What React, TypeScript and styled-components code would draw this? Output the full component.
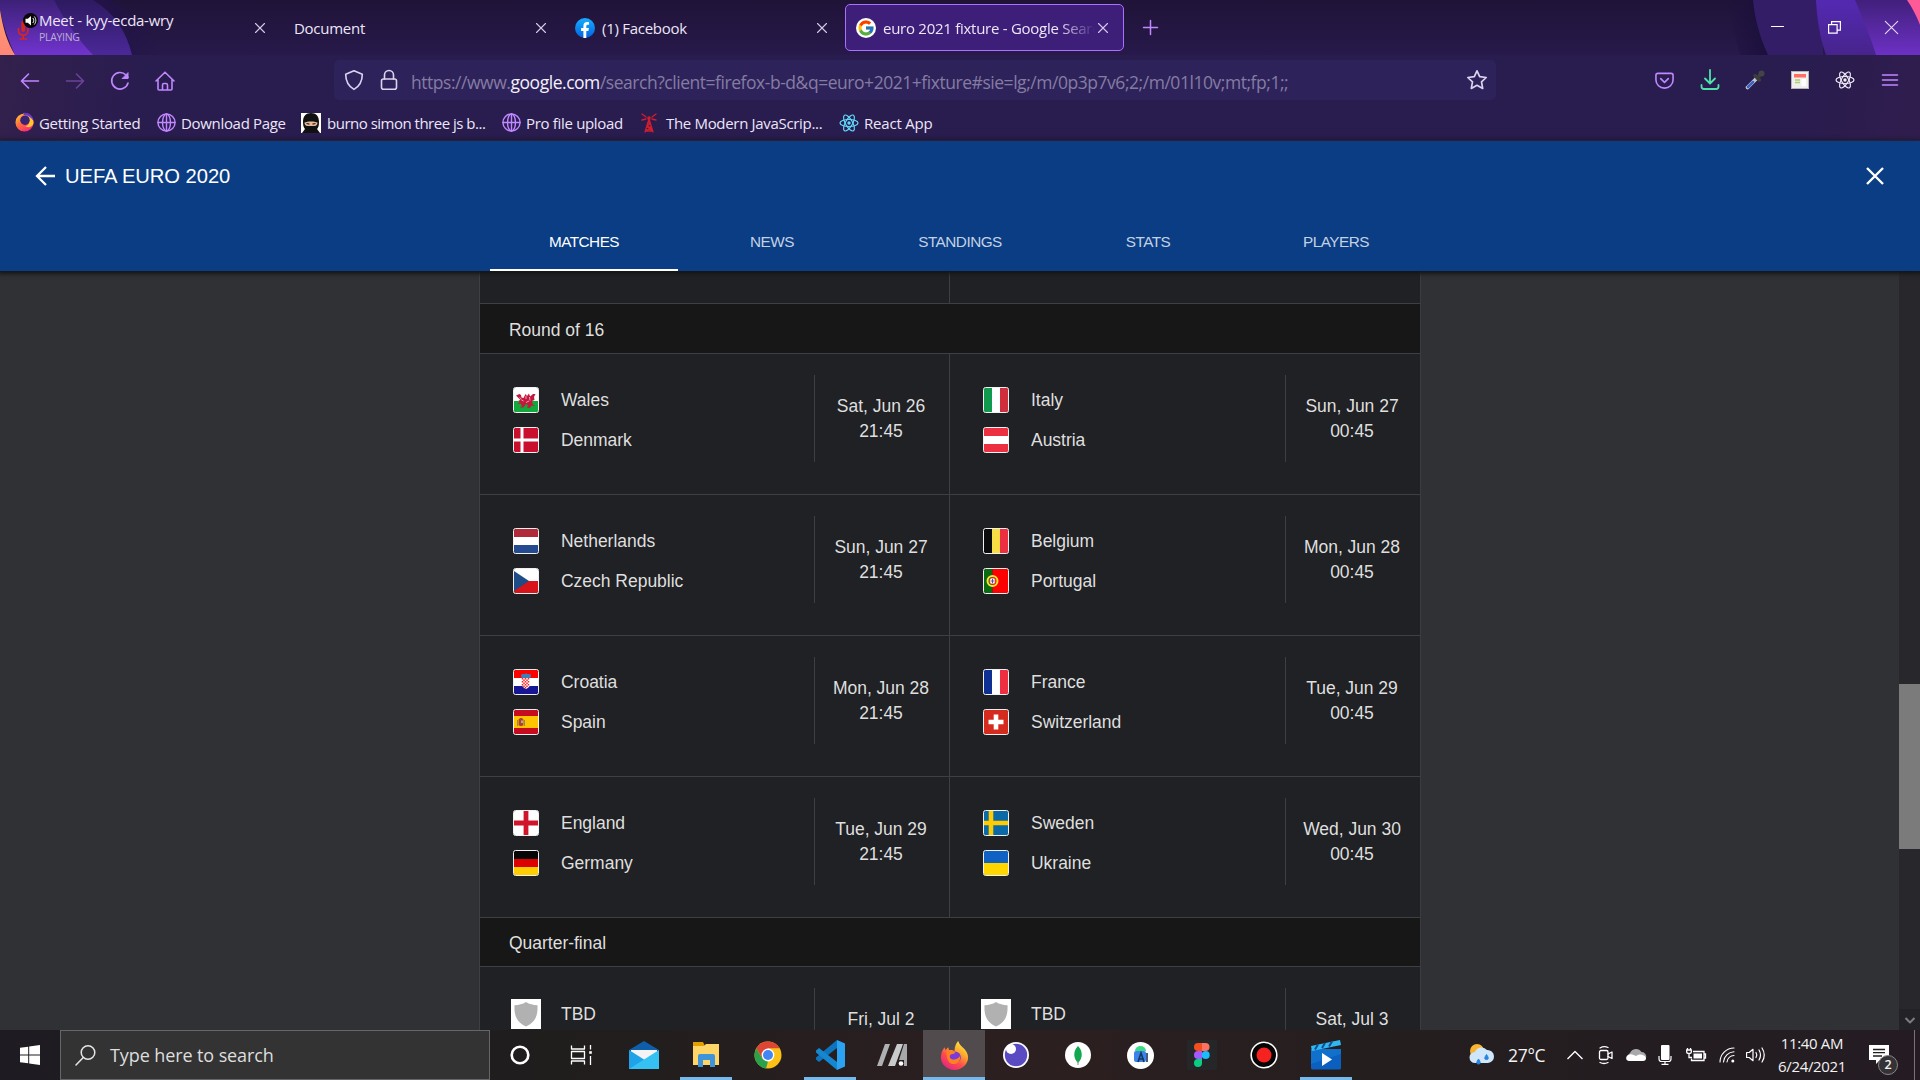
import React from "react";
import styled, { createGlobalStyle, css } from "styled-components";
import { FcGoogle } from "react-icons/fc";

const ui = `"Open Sans", "Noto Sans", sans-serif`;
const arial = `"Liberation Sans", Arial, sans-serif`;

const Global = createGlobalStyle`
  * { box-sizing: border-box; }
  html, body { margin: 0; background: #303134; overflow: hidden; }
  svg { display: block; flex: none; overflow: visible; }
`;

const Screen = styled.div`
  width: 1920px;
  height: 1080px;
  display: flex;
  flex-direction: column;
  overflow: hidden;
  font-family: ${ui};
`;

/* ---------- browser chrome ---------- */
const TabStrip = styled.div`
  position: relative;
  height: 55px;
  display: flex;
  align-items: center;
  padding-left: 2px;
  background: linear-gradient(#201338, #27194a);
`;
const ThemeArt = styled.svg<{ $side: "left" | "right" }>`
  position: absolute;
  top: 0;
  ${(p) => p.$side}: 0;
`;
const TabItem = styled.div<{ $active?: boolean; $bare?: boolean }>`
  position: relative;
  width: 279px;
  height: 47px;
  margin-right: 2px;
  padding: 0 15px 0 10px;
  display: flex;
  align-items: center;
  border-radius: 5px;
  border: 1px solid ${(p) => (p.$active ? "#ac70ff" : "transparent")};
  background: ${(p) => (p.$active ? "#3d1f7a" : "transparent")};
`;
const TabIcon = styled.div<{ $gap?: number }>`
  width: 20px;
  height: 20px;
  margin-right: ${(p) => p.$gap ?? 7}px;
`;
const TabLabels = styled.div<{ $single?: boolean }>`
  flex: 1;
  min-width: 0;
  padding-top: ${(p) => (p.$single ? 2 : 0)}px;
  display: flex;
  flex-direction: column;
`;
const TabTitle = styled.div<{ $fade?: boolean }>`
  font-size: 15px;
  line-height: 19px;
  letter-spacing: -0.27px;
  color: #ece6f8;
  white-space: nowrap;
  overflow: hidden;
  ${(p) => p.$fade && css`
    mask-image: linear-gradient(to right, #000 175px, transparent 212px);
  `}
`;
const TabNote = styled.div`
  font-size: 10.5px;
  line-height: 14px;
  letter-spacing: -0.3px;
  color: #b9aed2;
`;
const NewTab = styled.div`
  padding-left: 17px;
`;
const WindowButtons = styled.div`
  position: relative;
  margin-left: auto;
  display: flex;
`;
const WindowButton = styled.div`
  width: 57px;
  display: flex;
  justify-content: center;
`;
const Toolbars = styled.div`
  height: 86px;
  border-bottom: 1px solid #45306f;
  background: linear-gradient(100deg, #33204c 0, #2c1e4f 90px, #291c4e 150px, #291c4e 1780px, #301d4e 1910px);
`;
const NavBar = styled.div`
  height: 50px;
  display: flex;
  align-items: center;
`;
const NavButtons = styled.div`
  width: 334px;
  padding: 1px 0 0 7px;
  display: flex;
`;
const NavButton = styled.div`
  width: 45px;
  display: flex;
  justify-content: center;
`;
const UrlBar = styled.div`
  width: 1162px;
  height: 40px;
  padding: 0 9px 0 10px;
  display: flex;
  align-items: center;
  border-radius: 5px;
  background: #2d235a;
`;
const SiteBadges = styled.div`
  display: flex;
  gap: 15px;
`;
const UrlText = styled.div`
  flex: 1;
  margin-left: 12px;
  padding-top: 3px;
  font-size: 17.5px;
  letter-spacing: -0.46px;
  color: #857ca3;
  white-space: nowrap;
  b { font-weight: 400; color: #f4f0fc; }
`;
const Extensions = styled.div`
  margin-left: auto;
  padding-right: 8px;
  display: flex;
  align-items: center;
`;
const Bookmarks = styled.div`
  height: 35px;
  padding-left: 15px;
  display: flex;
  align-items: center;
`;
const Bookmark = styled.div<{ $w: number; $ls?: number; $gap?: number }>`
  width: ${(p) => p.$w}px;
  display: flex;
  align-items: center;
  gap: ${(p) => p.$gap ?? 5}px;
  font-size: 15px;
  letter-spacing: ${(p) => p.$ls ?? -0.32}px;
  white-space: nowrap;
  color: #ece6f8;
`;

/* ---------- page ---------- */
const BlueHeader = styled.header`
  position: relative;
  z-index: 1;
  height: 130px;
  flex: none;
  background: #0a3d84;
  box-shadow: 0 1px 4px 2px #151617;
  font-family: ${arial};
  display: flex;
  flex-direction: column;
  justify-content: space-between;
`;
const TitleRow = styled.div`
  height: 70px;
  padding: 0 35px;
  display: flex;
  align-items: center;
  justify-content: space-between;
`;
const Title = styled.div`
  display: flex;
  align-items: center;
  gap: 10px;
  font-size: 20.2px;
  letter-spacing: -0.06px;
  color: #fff;
`;
const SectionTabs = styled.nav`
  display: flex;
  justify-content: center;
`;
const SectionTab = styled.div<{ $on?: boolean }>`
  width: 188px;
  height: 58px;
  line-height: 58px;
  text-align: center;
  font-size: 15.3px;
  letter-spacing: -0.5px;
  color: ${(p) => (p.$on ? "#fff" : "#c4d1e3")};
  border-bottom: 2px solid ${(p) => (p.$on ? "#fff" : "transparent")};
`;
const Page = styled.main`
  height: 759px;
  flex: none;
  display: flex;
  background: #303134;
  overflow: hidden;
`;
const Scroller = styled.div`
  width: 1899px;
  padding-left: 479px;
  overflow: hidden;
`;
const Card = styled.section`
  width: 942px;
  height: 800px;
  border-left: 1px solid #3c4043;
  border-right: 1px solid #3a3c40;
  background: #202124;
  font-family: ${arial};
  font-size: 17.5px;
  letter-spacing: -0.02px;
  color: #dfdfdf;
`;
const RoundTitle = styled.div<{ $h: number }>`
  height: ${(p) => p.$h}px;
  padding: 3px 29px 0;
  display: flex;
  align-items: center;
  background: #171717;
  border-bottom: 1px solid #3c4043;
`;
const MatchRow = styled.div<{ $h?: number }>`
  height: ${(p) => p.$h ?? 141}px;
  display: grid;
  grid-template-columns: 470px 470px;
  border-bottom: 1px solid #3c4043;
`;
const MatchCell = styled.div<{ $first?: boolean }>`
  display: flex;
  justify-content: space-between;
  padding-top: 21px;
  ${(p) => p.$first && css`border-right: 1px solid #3c4043;`}
`;
const Teams = styled.div<{ $crest?: boolean }>`
  padding: ${(p) => (p.$crest ? 11 : 12)}px 0 0 ${(p) => (p.$crest ? 31 : 33)}px;
  display: flex;
  flex-direction: column;
  gap: 14px;
`;
const Team = styled.div<{ $gap: number }>`
  display: flex;
  align-items: center;
  gap: ${(p) => p.$gap}px;
`;
const Kickoff = styled.div`
  width: 135px;
  height: 87px;
  padding: 19px 2px 0 0;
  border-left: 1px solid #3c4043;
  text-align: center;
  line-height: 25px;
`;
const Scrollbar = styled.div`
  width: 21px;
  display: flex;
  flex-direction: column;
  justify-content: space-between;
  align-items: center;
  background: #28282c;
`;
const Thumb = styled.div`
  width: 21px;
  height: 165px;
  margin-top: 413px;
  background: #7b7b7c;
`;
const ScrollArrow = styled.div`
  width: 21px;
  height: 21px;
  display: flex;
  align-items: center;
  justify-content: center;
  background: #232327;
`;

/* ---------- taskbar ---------- */
const Taskbar = styled.footer`
  height: 50px;
  flex: none;
  display: flex;
  align-items: center;
  background: linear-gradient(to right, #1e1c22 0, #1f1d1d 500px, #2c1f20 1040px, #241e1f 1400px, #231d22 1700px, #241c22);
`;
const Start = styled.div`
  width: 60px;
  display: flex;
  justify-content: center;
`;
const SearchBox = styled.div`
  width: 430px;
  height: 50px;
  padding-left: 14px;
  display: flex;
  align-items: center;
  gap: 14px;
  background: #333333;
  border: 1px solid #66666a;
  font-size: 18px;
  letter-spacing: -0.1px;
  color: #dedede;
`;
const Apps = styled.div`
  display: flex;
  margin-left: -1px;
`;
const AppButton = styled.div<{ $active?: boolean; $running?: boolean }>`
  position: relative;
  width: 62px;
  height: 50px;
  display: flex;
  align-items: center;
  justify-content: center;
  background: ${(p) => (p.$active ? "#514b4d" : "transparent")};
  &::after {
    content: "";
    position: absolute;
    bottom: 0;
    left: ${(p) => (p.$active ? 0 : 5)}px;
    right: ${(p) => (p.$active ? 0 : 5)}px;
    height: 3px;
    background: ${(p) => (p.$active || p.$running ? "#76b9ed" : "transparent")};
  }
`;
const Tray = styled.div`
  margin-left: auto;
  display: flex;
  align-items: center;
  color: #f2f2f2;
`;
const TrayCell = styled.div<{ $w: number }>`
  width: ${(p) => p.$w}px;
  display: flex;
  justify-content: center;
`;
const Temp = styled.div`
  width: 64px;
  padding-left: 13px;
  font-size: 17.5px;
  letter-spacing: -0.3px;
`;
const Clock = styled.div`
  width: 84px;
  text-align: center;
  font-size: 15px;
  line-height: 23px;
  letter-spacing: -0.35px;
  white-space: nowrap;
`;
const Notify = styled.div`
  position: relative;
  width: 61px;
  height: 50px;
  padding: 15px 0 0 15px;
  border-right: 1px solid #77737a;
  margin-right: 5px;
`;
const Badge = styled.div`
  position: absolute;
  left: 24px;
  top: 25px;
  width: 20px;
  height: 20px;
  border-radius: 50%;
  border: 1px solid #88868a;
  background: #353236;
  text-align: center;
  font-size: 12.5px;
  font-weight: 600;
  line-height: 18px;
`;

/* ---------- icons ---------- */
const Stroke = ({ s = 20, c = "#c087ff", w = 1.8, vb = 20, children }: any) => (
  <svg width={s} height={s} viewBox={`0 0 ${vb} ${vb}`} fill="none" stroke={c} strokeWidth={w} strokeLinecap="round" strokeLinejoin="round">{children}</svg>
);
const CloseX = () => <Stroke s={10} vb={10} w={1.1} c="#d6cce8"><path d="M.5.5l9 9M9.5.5l-9 9" /></Stroke>;
const Globe = () => (
  <Stroke s={19} w={1.5}><circle cx="10" cy="10" r="9" /><ellipse cx="10" cy="10" rx="4.2" ry="9" /><path d="M1 10h18M10 1v18" /></Stroke>
);
const Flame = () => (
  <svg width="29" height="29" viewBox="0 0 32 32">
    <defs>
      <linearGradient id="fx" x1=".85" y1="0" x2=".2" y2="1">
        <stop offset="0" stopColor="#fff44f" /><stop offset=".35" stopColor="#ffa72a" /><stop offset=".65" stopColor="#ff4a4d" /><stop offset="1" stopColor="#e0218c" />
      </linearGradient>
    </defs>
    <path d="M20 0c1 2 1.500 4 4 6 5 4 7 8 7 12 0 8-7 14-15 14S1 26 1 18c0-5 2-8 4-11l1 3 3-3 1 3c2 0 4 0 6 1 0-5 2-9 4-11z" fill="url(#fx)" />
    <circle cx="16.500" cy="18" r="6.500" fill="#7a3bd8" />
    <path d="M7 12c3-2 6-2 10 1-2 2-5 1-6 3-1 3 2 5 5 4.500 3-.5 5-2 6-4 1 5-2 9-7 9S7 20 7 12z" fill="#ff7f23" />
  </svg>
);
const OldFirefox = () => (
  <svg width="19" height="19" viewBox="0 0 20 20">
    <defs><linearGradient id="ofx" x1="0" y1="0" x2=".7" y2="1"><stop offset="0" stopColor="#ffd23c" /><stop offset=".5" stopColor="#ff7139" /><stop offset="1" stopColor="#f5257b" /></linearGradient></defs>
    <circle cx="10" cy="10" r="9.500" fill="url(#ofx)" />
    <path d="M8 0c6-1 12 4 11.500 11C18 15 14 16 11 14c4-1 5-5 3-8-1-3-3-5-6-6z" fill="#ffc52e" />
    <circle cx="10.500" cy="7.500" r="5" fill="#3a2375" />
    <path d="M9 0c5-1 10 3 10.500 8C17 5 14 2 9 2z" fill="#6a35c9" />
  </svg>
);
const MeetIcon = () => (
  <svg width="20" height="20" viewBox="0 0 20 20">
    <g fill="none" stroke="#d7261e" strokeWidth="1.700"><path d="M5.500 10v2.500a4.700 4.700 0 0 0 9.400 0V10M10.200 17.500v4M6.500 21h7.500" /></g>
    <rect x="8.300" y="3" width="4" height="11" rx="2" fill="#d7261e" />
    <circle cx="17.500" cy="2.500" r="7.500" fill="#080808" />
    <path d="M12.500.700h2.300L18-2v9.500l-3.200-2.800h-2.300z" fill="#fff" />
    <path d="M19.800 0c1.300 1.500 1.300 3.500 0 5M21.300-1.500c2 2.500 2 5.500 0 8" fill="none" stroke="#fff" />
  </svg>
);
const Facebook = () => (
  <svg width="20" height="20" viewBox="0 0 20 20">
    <defs><linearGradient id="fb" x2="0" y2="1"><stop stopColor="#18acfe" /><stop offset="1" stopColor="#0163e0" /></linearGradient></defs>
    <circle cx="10" cy="10" r="10" fill="url(#fb)" />
    <path d="M8.400 20v-7.100H6.100V10h2.300V8c0-2.600 1.400-3.900 3.700-3.900.7 0 1.300.1 1.900.2v2.400h-1.200c-1.200 0-1.500.7-1.500 1.500V10h2.600l-.5 2.900h-2.100V20z" fill="#fff" />
  </svg>
);
const GoogleFav = () => (
  <svg width="20" height="20" viewBox="0 0 20 20"><circle cx="10" cy="10" r="10" fill="#fff" /><FcGoogle x="1" y="1" width="18" height="18" size={18} /></svg>
);
const Ninja = () => (
  <svg width="20" height="20" viewBox="0 0 20 20">
    <rect width="20" height="20" fill="#fff" /><path d="M2 9C2 3 5 0 10 0s8 3 8 9c0 4-1 6-2 7l3 4H1l3-4C3 15 2 13 2 9z" fill="#111" />
    <path d="M3.500 9.500c3-1.500 10-1.500 13 0 0 2-1 3.500-3 3.500h-7c-2 0-3-1.500-3-3.500z" fill="#e8bb9b" /><path d="M5.500 10.500l3 .7M14.500 10.500l-3 .7" stroke="#222" strokeWidth="1.200" />
  </svg>
);
const Tower = () => (
  <Stroke s={20} c="#cf1f2e" w={1.3}><path d="M10 6L6 19M10 6l4 13M8.500 10h3l-4 4h5l-6 4h7l-5-4M3 1l4 3M17 1l-4 3M3 7l4-1M17 7l-4-1" /><circle cx="10" cy="5" r="1.200" fill="#cf1f2e" /></Stroke>
);
const Orbit = ({ s, c }: { s: number; c: string }) => (
  <svg width={s} height={s} viewBox="0 0 20 20" fill="none" stroke={c} strokeWidth="1.200">
    {[0, 60, 120].map((a) => <ellipse key={a} cx="10" cy="10" rx="9" ry="3.500" transform={`rotate(${a} 10 10)`} />)}
    <circle cx="10" cy="10" r="1.700" fill={c} stroke="none" />
  </svg>
);

/* ---------- flags ---------- */
const bands = (dir: "h" | "v", cols: string[], sizes?: number[]) => {
  const z = sizes ?? cols.map(() => 24 / cols.length);
  let at = 0;
  return cols.map((c, i) => {
    const a = at;
    at += z[i];
    return dir === "h" ? <rect key={i} y={a} width="24" height={z[i]} fill={c} /> : <rect key={i} x={a} width={z[i]} height="24" fill={c} />;
  });
};
const flags: Record<string, React.ReactNode> = {
  Wales: <>{bands("h", ["#fff", "#12a83b"], [13, 11])}<path d="M2 7.500l3.500-1.500 1.500 1 .5 2.500 2 .5 2-4 1.500 2 2-2.500 1 3 3-2.500 2.500 0-1.500 3 .5 3-2.500 1 .5 3 2.500 2-3.500-.5-1.500 2.500-3-.5 1-2.500-2-1-2.500 3.500-3.500 0 2-1.500-1.500-2.500-3 .5 2-2-1-1.500 2-.5z" fill="#c4183c" /><path d="M7.500 12l2 1M15.500 9l.5 3.500M5.500 9.500l2 1.500M12 14.500l3-1.500M12 8v3" stroke="#fff" strokeWidth=".6" /></>,
  Denmark: <><rect width="24" height="24" fill="#c8102e" /><path d="M8 0v24M0 12h24" stroke="#fff" strokeWidth="3" /></>,
  Italy: bands("v", ["#109a50", "#fff", "#cf2f3c"]),
  Austria: bands("h", ["#ed2f42", "#fff", "#ed2f42"]),
  Netherlands: bands("h", ["#b02a3a", "#fff", "#244a90"]),
  "Czech Republic": <>{bands("h", ["#fff", "#d7141a"])}<path d="M0 2l15 10L0 22z" fill="#1d4c86" /></>,
  Belgium: bands("v", ["#0c0c0c", "#f9dd45", "#ed2f42"]),
  Portugal: <>{bands("v", ["#0c6b12", "#fe0000"], [8.5, 15.5])}<circle cx="8.500" cy="12" r="5" fill="none" stroke="#f7ea2b" strokeWidth="2" /><rect x="5.800" y="9" width="5.400" height="6" rx="1.500" fill="#fff" stroke="#e33" /><path d="M8.500 10v4M7 12h3" stroke="#4456a8" /></>,
  Croatia: <>{bands("h", ["#fe0000", "#fff", "#171796"])}<path d="M7.500 8h9v5c0 3-2 5-4.500 6C9.500 18 7.500 16 7.500 13z" fill="#fff" /><path d="M8.500 8v8M11.500 8v10.500M14.500 8v9" stroke="#f22" strokeDasharray="1.500 1.500" strokeWidth="1.500" /><path d="M10 9.500v8.500M13 9.500v9" stroke="#f22" strokeDasharray="1.500 1.500" strokeWidth="1.500" /><path d="M7 4.500l2-.5h2l1-1 1 1h2l2 .5-.5 3.500h-9z" fill="#3e7fb5" /></>,
  Spain: <>{bands("h", ["#c60b1e", "#ffc400", "#c60b1e"], [6, 12, 6])}<path d="M3 10h1.300v6H3zM9.700 10H11v6H9.700z" fill="#a3864a" /><path d="M4.700 9.500c1-2 3.600-2 4.600 0v5.500c-1 1.500-3.600 1.500-4.600 0z" fill="#a8452a" /><path d="M7 10.500h2v2.500H7z" fill="#b9a0b5" /></>,
  France: bands("v", ["#0e2f94", "#fff", "#ee2f42"]),
  Switzerland: <><rect width="24" height="24" fill="#d52b1e" /><path d="M12 4.500v15M4.500 12h15" stroke="#fff" strokeWidth="4.600" /></>,
  England: <><rect width="24" height="24" fill="#fff" /><path d="M12 0v24M0 12h24" stroke="#cf142b" strokeWidth="4.800" /></>,
  Germany: bands("h", ["#060606", "#dd0000", "#ffce00"]),
  Sweden: <><rect width="24" height="24" fill="#0a6aa7" /><path d="M7 0v24M0 12h24" stroke="#fecc00" strokeWidth="4.600" /></>,
  Ukraine: bands("h", ["#0f61c4", "#ffd600"]),
};
const Flag = ({ name }: { name: string }) => (
  <svg width="26" height="26" viewBox="-1 -1 26 26">
    <defs><clipPath id="flagclip"><rect width="24" height="24" rx="1" /></clipPath></defs>
    <g clipPath="url(#flagclip)">{flags[name]}</g>
    <rect x="-.5" y="-.5" width="25" height="25" rx="2" fill="none" stroke="#f1f1f1" />
  </svg>
);
const Crest = () => (
  <svg width="30" height="30" viewBox="0 0 30 30"><rect width="30" height="30" fill="#fff" /><path d="M15 3c3.500 2.200 7 3 11.500 3.200C27 17 24 23.500 15 27.500 6 23.500 3 17 3.500 6.200 8 6 11.500 5.200 15 3z" fill="#b1b1b1" /></svg>
);

const roundOf16 = [
  [["Wales", "Denmark", "Sat, Jun 26", "21:45"], ["Italy", "Austria", "Sun, Jun 27", "00:45"]],
  [["Netherlands", "Czech Republic", "Sun, Jun 27", "21:45"], ["Belgium", "Portugal", "Mon, Jun 28", "00:45"]],
  [["Croatia", "Spain", "Mon, Jun 28", "21:45"], ["France", "Switzerland", "Tue, Jun 29", "00:45"]],
  [["England", "Germany", "Tue, Jun 29", "21:45"], ["Sweden", "Ukraine", "Wed, Jun 30", "00:45"]],
];
const quarterFinals = [["TBD", "Fri, Jul 2"], ["TBD", "Sat, Jul 3"]];

const taskApps: { el: React.ReactNode; active?: boolean; running?: boolean }[] = [
  { el: <svg width="22" height="22" viewBox="0 0 22 22"><circle cx="11" cy="11" r="8.300" fill="none" stroke="#fff" strokeWidth="2.600" /></svg> },
  { el: <Stroke s={20} c="#fff" w={1.3}><path d="M-.5.500v3.500h13V.5M-.5 19.500V16h13v3.500M-.5 6.500h13v7h-13zM18.500 0v4.500M18.500 11v9" strokeLinecap="butt" /><path d="M17.200 6.200h2.600v2.600h-2.600z" fill="#fff" stroke="none" /></Stroke> },
  { el: <svg width="30" height="28" viewBox="0 0 30 28"><path d="M0 9L15 0l15 9v4H0z" fill="#0f5eaa" /><path d="M2 9h26v10H2z" fill="#f2f4f7" /><path d="M0 9l30 19H0z" fill="#1fa2e8" /><path d="M30 9v19H0z" fill="#35c1f1" /><path d="M3 9h24L15 18z" fill="#f4f4f4" /></svg> },
  { running: true, el: <svg width="28" height="26" viewBox="0 0 28 26"><path d="M1 0h10l2 4H1z" fill="#e0a000" /><path d="M1 4h11l2-2h13v21H1z" fill="#fdd667" /><path d="M6 14q0-2 2-2h13q2 0 2 2v11h-5v-7h-7v7H6z" fill="#3f93d8" /></svg> },
  { el: <svg width="28" height="28" viewBox="0 0 28 28"><circle cx="14" cy="14" r="13.500" fill="#fbc116" /><path d="M2.300 7.300A13.500 13.500 0 0 1 25.700 7.300H14l-5.800 10z" fill="#de4535" /><path d="M2.300 7.300l6 10.200L14 20.500l-2 6.900A13.500 13.500 0 0 1 2.300 7.300z" fill="#2aa24c" /><circle cx="14" cy="14" r="6.400" fill="#fff" /><circle cx="14" cy="14" r="5" fill="#4285f4" /></svg> },
  { running: true, el: <svg width="30" height="30" viewBox="0 0 30 30"><path d="M22 0l8 3.500v23L22 30z" fill="#2ba2f2" /><path d="M22 0v8L4 22l-3-2.500v-2z" fill="#0d74bd" /><path d="M22 30v-8L4 8l-3 2.500v2z" fill="#1587d0" /></svg> },
  { el: <svg width="30" height="22" viewBox="0 0 30 22"><path d="M8 0h5L5 22H0z" fill="#aeb0b2" /><path d="M20 0h6l-8 22h-7z" fill="#c9cacb" /><path d="M30 0v22h-3v-6h-5L27 0z" fill="#a6a8aa" /><circle cx="24" cy="19.500" r="2.300" fill="#fff" /></svg> },
  { active: true, el: <Flame /> },
  { el: <svg width="26" height="26" viewBox="0 0 26 26"><circle cx="13" cy="13" r="13" fill="#fff" /><circle cx="13" cy="13" r="11.200" fill="#5a4bc3" /><circle cx="8" cy="7" r="5" fill="#fff" /></svg> },
  { el: <svg width="26" height="26" viewBox="0 0 26 26"><circle cx="13" cy="13" r="13" fill="#fff" /><path d="M13 4c5 5 5 12 0 17C8 16 8 9 13 4z" fill="#12a84f" /><path d="M13 19v4" stroke="#888" /></svg> },
  { el: <svg width="27" height="27" viewBox="0 0 27 27"><circle cx="13.500" cy="13.500" r="13.500" fill="#fff" /><path d="M8 9a5.500 5 0 0 1 11 0z" fill="#3ddc84" /><rect x="7" y="9" width="12" height="11" rx="2" fill="#3b82ec" /><path d="M11 20l3-9 3 9M20 11v9M12 17h5" fill="none" stroke="#15375f" strokeWidth="1.600" /></svg> },
  { el: <svg width="30" height="30" viewBox="0 0 30 30"><rect width="30" height="30" fill="#242628" /><path d="M15 3h-4a4 4 0 0 0 0 8h4z" fill="#f24e1e" /><path d="M15 3h3.500a4 4 0 0 1 0 8H15z" fill="#ff7262" /><path d="M15 11h-4a4 4 0 0 0 0 8h4z" fill="#a259ff" /><circle cx="18.700" cy="15" r="4" fill="#1abcfe" /><path d="M15 19h-4a4 4 0 1 0 4 4z" fill="#0acf83" /></svg> },
  { el: <svg width="28" height="28" viewBox="0 0 28 28"><circle cx="14" cy="14" r="12.800" fill="#050505" stroke="#fff" strokeWidth="1.600" /><circle cx="14" cy="14" r="7.500" fill="#f5221f" /></svg> },
  { running: true, el: <svg width="30" height="30" viewBox="0 0 30 30"><path d="M0 9h30v19q0 1.500-1.500 1.500h-27Q0 29.500 0 28z" fill="#0a5fbf" /><path d="M0 9h30v5L0 24z" fill="#1170cc" /><path d="M0 6l29-6 1 5L1 11z" fill="#32b8f0" /><path d="M7 4.500l-3 5M14 3l-3 5M21 1.500l-3 5" stroke="#0c4f96" strokeWidth="2" /><path d="M11 13l10 6.500L11 26z" fill="#fff" /></svg> },
];

export default function App() {
  return (
    <Screen>
      <Global />
      <TabStrip>
        <ThemeArt $side="left" width="170" height="55">
          <defs>
            <linearGradient id="v1" x2="0" y2="1"><stop stopColor="#3c2176" /><stop offset="1" stopColor="#7133cf" /></linearGradient>
            <linearGradient id="v2" x2="0" y2="1"><stop stopColor="#2d1a60" /><stop offset="1" stopColor="#4b2899" /></linearGradient>
            <linearGradient id="v3" x2="0" y2="1"><stop stopColor="#ff9c6b" /><stop offset="1" stopColor="#ff8678" /></linearGradient>
            <linearGradient id="v4" x2="1"><stop stopColor="#22124a" /><stop offset="1" stopColor="#22124a" stopOpacity="0" /></linearGradient>
          </defs>
          <path d="M93 0c20 12 33 30 38 55h28C150 30 130 10 110 0z" fill="url(#v4)" />
          <path d="M50 0h43c20 12 33 30 39 55H88z" fill="url(#v2)" />
          <path d="M0 0h54c10 20 25 40 39 55H15C8 40 3 25 0 10z" fill="url(#v1)" />
          <path d="M0 10c3 18 7 32 15 45H0z" fill="url(#v3)" />
        </ThemeArt>
        <ThemeArt $side="right" width="200" height="55">
          <defs>
            <linearGradient id="r0" x2="1"><stop stopColor="#1b0f3c" stopOpacity="0" /><stop offset="1" stopColor="#1b0f3c" /></linearGradient>
            <linearGradient id="r2" x2="0" y2="1"><stop stopColor="#5429b2" /><stop offset="1" stopColor="#47248c" /></linearGradient>
            <linearGradient id="r3" x2="0" y2="1"><stop stopColor="#41207c" /><stop offset="1" stopColor="#6d30c4" /></linearGradient>
          </defs>
          <path d="M5 0h29l14 55H20z" fill="url(#r0)" />
          <path d="M33 0h70v55H48C40 38 35 20 33 0z" fill="#331d66" />
          <path d="M96 0h60v55h-50C100 38 97 20 96 0z" fill="url(#r2)" />
          <path d="M135 0h65v55h-44C150 35 142 17 135 0z" fill="url(#r3)" />
          <path d="M187 0h13v25c-4-10-8-18-13-25z" fill="#ff5a98" />
        </ThemeArt>
        <TabItem>
          <TabIcon $gap={6}><MeetIcon /></TabIcon>
          <TabLabels><TabTitle>Meet - kyy-ecda-wry</TabTitle><TabNote>PLAYING</TabNote></TabLabels>
          <CloseX />
        </TabItem>
        <TabItem><TabLabels $single><TabTitle>Document</TabTitle></TabLabels><CloseX /></TabItem>
        <TabItem><TabIcon><Facebook /></TabIcon><TabLabels $single><TabTitle>(1) Facebook</TabTitle></TabLabels><CloseX /></TabItem>
        <TabItem $active><TabIcon><GoogleFav /></TabIcon><TabLabels $single><TabTitle $fade>euro 2021 fixture - Google Search</TabTitle></TabLabels><CloseX /></TabItem>
        <NewTab><Stroke s={15} vb={15} w={1.5}><path d="M7.500.5v14M.5 7.500h14" /></Stroke></NewTab>
        <WindowButtons>
          <WindowButton><Stroke s={13} vb={13} w={1.2} c="#fff"><path d="M.5 5.500h12" /></Stroke></WindowButton>
          <WindowButton><Stroke s={13} vb={13} w={1.2} c="#fff"><path d="M.6 3.600h8.500v8.500H.6zM3.600 3.600v-3h8.800v8.500H9" strokeLinejoin="miter" /></Stroke></WindowButton>
          <WindowButton><Stroke s={13} vb={13} w={1.1} c="#e6dcfa"><path d="M.3.300l12.400 12.400M12.700.3L.3 12.700" /></Stroke></WindowButton>
        </WindowButtons>
      </TabStrip>
      <Toolbars>
        <NavBar>
          <NavButtons>
            <NavButton><Stroke w={1.6}><path d="M18.500 10h-17M8.500 3L1.500 10l7 7" /></Stroke></NavButton>
            <NavButton><Stroke w={1.6} c="#6b4396"><path d="M1.500 10h17M11.500 3l7 7-7 7" /></Stroke></NavButton>
            <NavButton><Stroke w={1.6}><path d="M18 12a8.300 8.300 0 1 1-2-8l2 2.500" /><path d="M18 2v5.500h-5.500z" fill="#c087ff" strokeWidth="1" /></Stroke></NavButton>
            <NavButton><Stroke w={1.6}><path d="M1 10l9-8.800L19 10M3 8.500V18q0 1 1 1h12q1 0 1-1V8.500M7.500 19v-5q0-1.500 1.500-1.500h2q1.500 0 1.500 1.500v5" /></Stroke></NavButton>
          </NavButtons>
          <UrlBar>
            <SiteBadges>
              <Stroke c="#ddd3ef" w={1.6}><path d="M10 .8l8.300 3.400c0 6-2 11.500-8.300 15.200C3.700 15.700 1.700 10.200 1.700 4.200z" /></Stroke>
              <Stroke c="#ddd3ef" w={1.6}><rect x="2.500" y="9" width="15" height="10.300" rx="2" /><path d="M5.500 9V5a4.500 4.500 0 0 1 9 0v4" /></Stroke>
            </SiteBadges>
            <UrlText>https://www.<b>google.com</b>/search?client=firefox-b-d&amp;q=euro+2021+fixture#sie=lg;/m/0p3p7v6;2;/m/01l10v;mt;fp;1;;</UrlText>
            <Stroke c="#ddd3ef" w={1.7}><path d="M10 .8l2.700 5.900 6.500.8-4.700 4.400 1.200 6.500L10 15.300l-5.700 3.100 1.200-6.500L.8 7.500l6.500-.8z" /></Stroke>
          </UrlBar>
          <Extensions>
            <NavButton><Stroke s={19} w={1.7}><path d="M3 2.500h14q2 0 2 2V9.500a9 8.500 0 0 1-18 0V4.500q0-2 2-2zM6 8l4 4 4-4" /></Stroke></NavButton>
            <NavButton><Stroke c="#4fe3ab"><path d="M10 0v13M5 8.500l5 5 5-5M1.500 15v1.500q0 2.500 2.500 2.500h12q2.500 0 2.500-2.500V15" /></Stroke></NavButton>
            <NavButton><svg width="20" height="20" viewBox="0 0 20 20"><path d="M2.500 17.500l9-9" stroke="#c3c6ce" strokeWidth="3.800" strokeLinecap="round" /><path d="M3 17l5-5" stroke="#3d62c8" strokeWidth="2.500" strokeLinecap="round" /><path d="M10 5.500l4.500 4.500M12 8l5-5" stroke="#3c3c3c" strokeWidth="3.500" strokeLinecap="round" /><circle cx="16.500" cy="3.500" r="3" fill="#444" /></svg></NavButton>
            <NavButton><svg width="18" height="18" viewBox="0 0 18 18"><rect x=".5" y=".5" width="17" height="17" fill="#f0efed" stroke="#b5b5b5" /><rect x="3" y="3" width="12" height="3.500" fill="#ff6d66" /><path d="M4 9h5M4 11.500h5" stroke="#a7d36b" strokeWidth="1.300" /><rect x="10.500" y="8" width="4.500" height="7" fill="#fff" /></svg></NavButton>
            <NavButton><Orbit s={20} c="#efeaf6" /></NavButton>
            <NavButton><Stroke s={16} vb={16} w={1.5}><path d="M.5 3h15M.5 8h15M.5 13h15" /></Stroke></NavButton>
          </Extensions>
        </NavBar>
        <Bookmarks>
          <Bookmark $w={142}><OldFirefox />Getting Started</Bookmark>
          <Bookmark $w={144}><Globe />Download Page</Bookmark>
          <Bookmark $w={201} $gap={6} $ls={-0.5}><Ninja />burno simon three js b...</Bookmark>
          <Bookmark $w={137}><Globe />Pro file upload</Bookmark>
          <Bookmark $w={200} $gap={7}><Tower />The Modern JavaScrip...</Bookmark>
          <Bookmark $w={120} $ls={-0.2}><Orbit s={20} c="#61dafb" />React App</Bookmark>
        </Bookmarks>
      </Toolbars>

      <BlueHeader>
        <TitleRow>
          <Title><Stroke s={20} c="#fff" w={2.3}><path d="M20 10H2.500M11 1L2 10l9 9" strokeLinecap="butt" strokeLinejoin="miter" /></Stroke>UEFA EURO 2020</Title>
          <Stroke s={20} c="#fff" w={2.4}><path d="M2 2l16 16M18 2L2 18" strokeLinecap="butt" /></Stroke>
        </TitleRow>
        <SectionTabs>
          {["MATCHES", "NEWS", "STANDINGS", "STATS", "PLAYERS"].map((t, i) => <SectionTab key={t} $on={i === 0}>{t}</SectionTab>)}
        </SectionTabs>
      </BlueHeader>

      <Page>
        <Scroller>
          <Card>
            <MatchRow $h={33}><MatchCell $first /><MatchCell /></MatchRow>
            <RoundTitle $h={50}>Round of 16</RoundTitle>
            {roundOf16.map((row, r) => (
              <MatchRow key={r}>
                {row.map(([a, b, day, time], i) => (
                  <MatchCell key={a} $first={i === 0}>
                    <Teams>
                      <Team $gap={22}><Flag name={a} />{a}</Team>
                      <Team $gap={22}><Flag name={b} />{b}</Team>
                    </Teams>
                    <Kickoff>{day}<br />{time}</Kickoff>
                  </MatchCell>
                ))}
              </MatchRow>
            ))}
            <RoundTitle $h={49}>Quarter-final</RoundTitle>
            <MatchRow>
              {quarterFinals.map(([team, day], i) => (
                <MatchCell key={day} $first={i === 0}>
                  <Teams $crest><Team $gap={20}><Crest />{team}</Team></Teams>
                  <Kickoff>{day}</Kickoff>
                </MatchCell>
              ))}
            </MatchRow>
          </Card>
        </Scroller>
        <Scrollbar>
          <Thumb />
          <ScrollArrow><Stroke s={10} vb={10} c="#7d7d80" w={2}><path d="M.5 3L5 7.500 9.500 3" strokeLinecap="butt" /></Stroke></ScrollArrow>
        </Scrollbar>
      </Page>

      <Taskbar>
        <Start><svg width="20" height="20" viewBox="0 0 20 20" fill="#fff"><path d="M0 2.800L8.200 1.700v7.800H0zM9.200 1.500L20 0v9.500H9.200zM0 10.500h8.200v7.800L0 17.200zM9.200 10.500H20V20L9.200 18.500z" /></svg></Start>
        <SearchBox>
          <Stroke s={21} vb={21} c="#e6e6e6" w={1.5}><circle cx="13" cy="7.500" r="6.800" /><path d="M8.300 12.500L1 20" /></Stroke>
          Type here to search
        </SearchBox>
        <Apps>{taskApps.map((a, i) => <AppButton key={i} $active={a.active} $running={a.running}>{a.el}</AppButton>)}</Apps>
        <Tray>
          <svg width="26" height="22" viewBox="0 0 26 22"><circle cx="8" cy="7" r="7" fill="#f9b531" /><path d="M6 19a5.500 5.500 0 0 1 0-11 7 7 0 0 1 12-2 6.500 6.500 0 0 1 1 13z" fill="#cfe6fb" /><path d="M17.500 10.500q3.500 5 0 5t0-5zM9.500 15q3.500 5 0 5t0-5z" fill="#2b82e0" stroke="#2b82e0" /></svg>
          <Temp>27°C</Temp>
          <TrayCell $w={32}><Stroke s={16} vb={16} c="#fff" w={1.4}><path d="M.5 12L8 4.500l7.500 7.500" strokeLinecap="butt" /></Stroke></TrayCell>
          <TrayCell $w={30}><Stroke s={18} vb={18} c="#fff" w={1.3}><rect x="2.500" y="4.500" width="8.500" height="9" rx="1.500" /><path d="M11 8l4-2v6.500l-4-2M3 2q4-2.500 8-.5M3 16.500q4 2 8 0" /></Stroke></TrayCell>
          <TrayCell $w={29}><svg width="20" height="14" viewBox="0 0 20 14"><path d="M4 12a4 4 0 0 1 0-7 6.500 6.500 0 0 1 11.500-1 4.500 4.500 0 0 1 .5 9z" fill="#a9a9ab" /><path d="M3 13c-3 0-4-4-1-6 3-2 6 0 8 1 3-3 9-1.500 10 2 0 2-1 3-3 3z" fill="#fff" /></svg></TrayCell>
          <TrayCell $w={30}><svg width="14" height="20" viewBox="0 0 14 20"><rect x="3" width="8.500" height="15" rx="1" fill="#fff" /><path d="M1 11v3q0 2.500 2.500 2.500h7q2.500 0 2.500-2.500v-3M7 16v3M3.500 19.400h7" fill="none" stroke="#fff" strokeWidth="1.200" /></svg></TrayCell>
          <TrayCell $w={31}><svg width="20" height="14" viewBox="0 0 20 14" fill="none" stroke="#fff" strokeWidth="1.300"><path d="M7 3.500h11v9H5.500v-2M18 6h1.500v4H18M1.500 0v2M4.500 0v2" /><path d="M.7 2h4.600v2q0 1.500-2.300 1.500T.7 4zM3 5.500v4h3" /><rect x="7.500" y="5.500" width="8.500" height="5" fill="#fff" stroke="none" /></svg></TrayCell>
          <TrayCell $w={31}><Stroke s={16} vb={16} c="#fff" w={1.1}><path d="M1 15A14 14 0 0 1 15 1M4.500 15A11 11 0 0 1 15 4.800M8 15a7.500 7.500 0 0 1 7-6.500" /><circle cx="13.800" cy="14" r="1.500" fill="#fff" stroke="none" /></Stroke></TrayCell>
          <TrayCell $w={28}><Stroke s={20} c="#fff" w={1.2}><path d="M.6 7.500h2.600L7 4.300v11.400l-3.800-3.200H.6zM10 7.500q1.600 2.500 0 5M13 5q3 5 0 10M16 3q4.500 7 0 14" /></Stroke></TrayCell>
          <Clock>11:40 AM<br />6/24/2021</Clock>
          <Notify>
            <svg width="20" height="19" viewBox="0 0 20 19"><path d="M0 0h20v15h-9l-4 4v-4H0z" fill="#fff" /><path d="M4 4.500h12M4 7.700h12M4 11h9" stroke="#231d22" strokeWidth="1.300" /></svg>
            <Badge>2</Badge>
          </Notify>
        </Tray>
      </Taskbar>
    </Screen>
  );
}
